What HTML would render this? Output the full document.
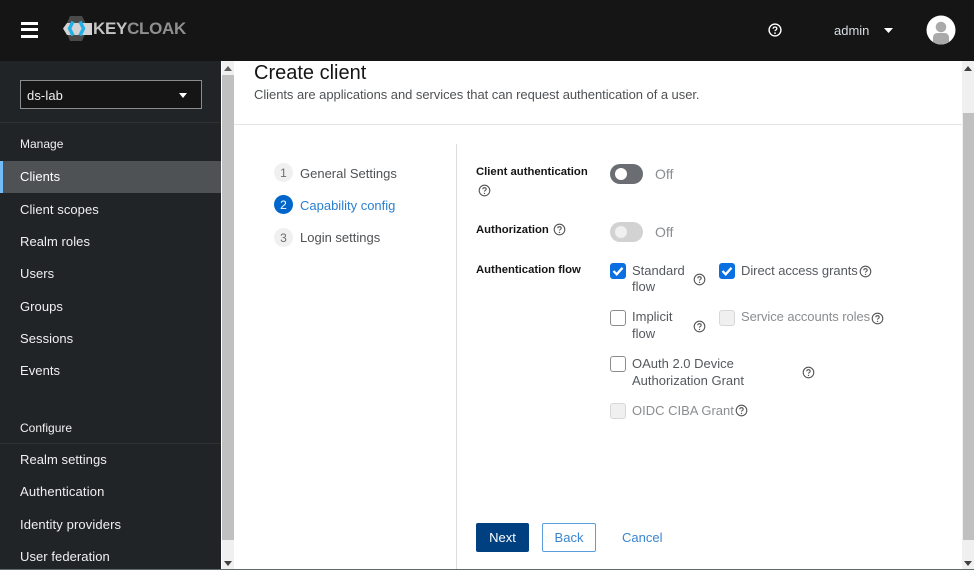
<!DOCTYPE html>
<html><head><meta charset="utf-8"><style>
*{box-sizing:border-box}
html,body{margin:0;padding:0;width:974px;height:570px;overflow:hidden;background:#fff;font-family:"Liberation Sans",sans-serif}
.t{position:absolute;white-space:nowrap;font-size:13px;line-height:17px;color:#151515}
.s{color:#f0f0f0}
.n{letter-spacing:.06px}
.b{position:absolute;background:#fff}
.g{color:#55595e}
.d{color:#8a8d90}
.bd{font-weight:bold;font-size:11.3px;color:#151515}
svg.q{position:absolute;width:13px;height:13px}
.cb{position:absolute;width:16px;height:16px;border:1px solid #8a8d90;border-radius:3px;background:#fff}
.cb.on{background:#0a6fe0;border-color:#0a6fe0}
.cb.dis{background:#f0f0f0;border-color:#d8d8d8}
.num{position:absolute;left:274px;width:19px;height:19px;border-radius:50%;background:#f0f0f0;color:#6a6e73;font-size:12px;line-height:20px;text-align:center}
</style></head><body>
<svg width="0" height="0" style="position:absolute"><defs><symbol id="q" viewBox="0 0 13 13"><circle cx="6.5" cy="6.5" r="5.3" fill="none" stroke="#555" stroke-width="1.1"/><path d="M4.8 5.300c0-2.100 3.400-2.100 3.400 0 0 1.200-1.700 1.100-1.700 2.300" fill="none" stroke="#555" stroke-width="1.100"/><circle cx="6.500" cy="9.400" r=".7" fill="#555"/></symbol></defs></svg>

<div class="b" style="left:0;top:0;width:974px;height:61px;background:#151515"></div>
<div class="b" style="left:21px;top:22px;width:17px;height:3px;background:#fff"></div>
<div class="b" style="left:21px;top:28px;width:17px;height:3px;background:#fff"></div>
<div class="b" style="left:21px;top:35px;width:17px;height:3px;background:#fff"></div>
<svg style="position:absolute;left:62px;top:15px" width="32" height="27" viewBox="0 0 32 27"><path d="M8 1H20L26 13L20 26H8L3 13Z" fill="#4a4a4a"/><path d="M1 13.500L5 8H30V20H5Z" fill="#d4d4d4"/><path d="M11 6.500L7.500 13.500L11 20.500" fill="none" stroke="#1fb0e8" stroke-width="3.400"/><path d="M18 6.500L21.500 13.500L18 20.500" fill="none" stroke="#1fb0e8" stroke-width="3.400"/></svg>
<div class="t" style="left:93px;top:18px;font-size:17px;line-height:22px;font-weight:bold;color:#c4c4c4;letter-spacing:-.3px">KEY<span style="color:#8f8f8f">CLOAK</span></div>
<svg class="q" style="left:768px;top:23px;width:14px;height:14px" viewBox="0 0 13 13"><circle cx="6.500" cy="6.500" r="5.500" fill="none" stroke="#fff" stroke-width="1.300"/><path d="M4.800 5.300c0-2.100 3.400-2.100 3.400 0 0 1.200-1.700 1.100-1.700 2.300" fill="none" stroke="#fff" stroke-width="1.200"/><circle cx="6.500" cy="9.400" r=".8" fill="#fff"/></svg>
<div class="t s" style="left:834px;top:22px;color:#d8dde6">admin</div>
<svg style="position:absolute;left:884px;top:28px" width="9" height="5"><path d="M0 0H9L4.500 5Z" fill="#fff"/></svg>
<svg style="position:absolute;left:926px;top:15px" width="30" height="30" viewBox="0 0 30 30"><defs><clipPath id="av"><circle cx="15" cy="15" r="14.500"/></clipPath></defs><circle cx="15" cy="15" r="14.500" fill="#fff"/><circle cx="15" cy="12" r="5.300" fill="#aaa"/><path clip-path="url(#av)" d="M7 30V23C7 19.500 9 18 12 18H18C21 18 23 19.500 23 23V30Z" fill="#aaa"/></svg>

<div class="b" style="left:0;top:61px;width:221px;height:509px;background:#212427"></div>
<div class="b" style="left:20px;top:80px;width:182px;height:29px;background:#151515;border:1px solid #8a8d90"></div>
<div class="t s n" style="left:27px;top:87px;letter-spacing:.1px">ds-lab</div>
<svg style="position:absolute;left:179px;top:93px" width="8" height="5"><path d="M0 0H8L4 5Z" fill="#fff"/></svg>
<div class="b" style="left:0;top:122px;width:221px;height:1px;background:#2e3135"></div>
<div class="t s" style="left:20px;top:136px;font-size:12px">Manage</div>
<div class="b" style="left:0;top:161px;width:221px;height:32px;background:#4f5255"></div>
<div class="b" style="left:0;top:161px;width:3px;height:32px;background:#73bcf7"></div>
<div class="t n" style="left:20px;top:168px;color:#fff">Clients</div>
<div class="t s n" style="left:20px;top:201px">Client scopes</div>
<div class="t s n" style="left:20px;top:233px">Realm roles</div>
<div class="t s n" style="left:20px;top:265px">Users</div>
<div class="t s n" style="left:20px;top:298px">Groups</div>
<div class="t s n" style="left:20px;top:330px">Sessions</div>
<div class="t s n" style="left:20px;top:362px">Events</div>
<div class="t s" style="left:20px;top:420px;font-size:12px">Configure</div>
<div class="b" style="left:0;top:443px;width:221px;height:1px;background:#2e3135"></div>
<div class="t s n" style="left:20px;top:451px">Realm settings</div>
<div class="t s n" style="left:20px;top:483px;letter-spacing:.15px">Authentication</div>
<div class="t s n" style="left:20px;top:516px;letter-spacing:.12px">Identity providers</div>
<div class="t s n" style="left:20px;top:548px">User federation</div>

<div class="b" style="left:222px;top:61px;width:12px;height:509px;background:#f0f0f0"></div>
<div class="b" style="left:222px;top:75px;width:12px;height:465px;background:#c0c0c0"></div>
<svg style="position:absolute;left:224px;top:66px" width="8" height="5"><path d="M0 5H8L4 0Z" fill="#606060"/></svg>
<svg style="position:absolute;left:224px;top:561px" width="8" height="5"><path d="M0 0H8L4 5Z" fill="#404040"/></svg>
<div class="b" style="left:962px;top:61px;width:12px;height:509px;background:#f0f0f0"></div>
<div class="b" style="left:963px;top:113px;width:11px;height:427px;background:#c0c0c0"></div>
<svg style="position:absolute;left:964px;top:66px" width="8" height="5"><path d="M0 5H8L4 0Z" fill="#404040"/></svg>
<svg style="position:absolute;left:964px;top:561px" width="8" height="5"><path d="M0 0H8L4 5Z" fill="#404040"/></svg>

<div class="t" style="left:254px;top:61px;font-size:20px;line-height:24px">Create client</div>
<div class="t" style="left:254px;top:86px;color:#4f5255;letter-spacing:-.05px">Clients are applications and services that can request authentication of a user.</div>
<div class="b" style="left:234px;top:124px;width:728px;height:1px;background:#e4e4e4"></div>
<div class="b" style="left:456px;top:144px;width:1px;height:426px;background:#dcdcdc"></div>

<div class="num" style="top:163px">1</div>
<div class="t" style="left:300px;top:165px;color:#4f5255">General Settings</div>
<div class="num" style="top:195px;background:#06c;color:#fff">2</div>
<div class="t" style="left:300px;top:197px;color:#2b7fd0">Capability config</div>
<div class="num" style="top:228px">3</div>
<div class="t" style="left:300px;top:229px;color:#4f5255">Login settings</div>

<div class="t bd" style="left:476px;top:164px">Client authentication</div>
<svg class="q" style="left:478px;top:184px"><use href="#q"/></svg>
<div class="b" style="left:610px;top:164px;width:33px;height:20px;border-radius:10px;background:#6a6e73"></div>
<div class="b" style="left:615px;top:168px;width:12px;height:12px;border-radius:50%"></div>
<div class="t d" style="left:655px;top:166px;font-size:14px">Off</div>

<div class="t bd" style="left:476px;top:222px">Authorization</div>
<svg class="q" style="left:553px;top:223px"><use href="#q"/></svg>
<div class="b" style="left:610px;top:222px;width:33px;height:20px;border-radius:10px;background:#d2d2d2"></div>
<div class="b" style="left:615px;top:226px;width:12px;height:12px;border-radius:50%;background:#f0f0f0"></div>
<div class="t d" style="left:655px;top:224px;font-size:14px">Off</div>

<div class="t bd" style="left:476px;top:262px">Authentication flow</div>

<div class="cb on" style="left:610px;top:263px"><svg width="14" height="14" viewBox="0 0 14 14"><path d="M2.500 7L5.700 10.300L11.500 3.800" fill="none" stroke="#fff" stroke-width="2.300"/></svg></div>
<div class="t g" style="left:632px;top:262px">Standard</div>
<div class="t g" style="left:632px;top:278px">flow</div>
<svg class="q" style="left:693px;top:273px"><use href="#q"/></svg>
<div class="cb on" style="left:719px;top:263px"><svg width="14" height="14" viewBox="0 0 14 14"><path d="M2.500 7L5.700 10.300L11.500 3.800" fill="none" stroke="#fff" stroke-width="2.300"/></svg></div>
<div class="t g" style="left:741px;top:262px;letter-spacing:-.05px">Direct access grants</div>
<svg class="q" style="left:859px;top:265px"><use href="#q"/></svg>

<div class="cb" style="left:610px;top:310px"></div>
<div class="t g" style="left:632px;top:308px">Implicit</div>
<div class="t g" style="left:632px;top:325px">flow</div>
<svg class="q" style="left:693px;top:320px"><use href="#q"/></svg>
<div class="cb dis" style="left:719px;top:310px"></div>
<div class="t d" style="left:741px;top:308px;letter-spacing:-.08px">Service accounts roles</div>
<svg class="q" style="left:871px;top:312px"><use href="#q"/></svg>

<div class="cb" style="left:610px;top:356px"></div>
<div class="t g" style="left:632px;top:355px">OAuth 2.0 Device</div>
<div class="t g" style="left:632px;top:372px">Authorization Grant</div>
<svg class="q" style="left:802px;top:366px"><use href="#q"/></svg>

<div class="cb dis" style="left:610px;top:403px"></div>
<div class="t d" style="left:632px;top:402px">OIDC CIBA Grant</div>
<svg class="q" style="left:735px;top:404px"><use href="#q"/></svg>

<div class="b" style="left:476px;top:523px;width:53px;height:29px;background:#004080;border-radius:2px"></div>
<div class="t" style="left:476px;top:529px;width:53px;text-align:center;color:#fff">Next</div>
<div class="b" style="left:542px;top:523px;width:54px;height:29px;border:1px solid #5a9fdc;border-radius:2px"></div>
<div class="t" style="left:542px;top:529px;width:54px;text-align:center;color:#3a85d0">Back</div>
<div class="t" style="left:622px;top:529px;color:#3a85d0">Cancel</div>
<div class="b" style="left:0;top:569px;width:974px;height:1px;background:#5f6b6b"></div>
</body></html>
